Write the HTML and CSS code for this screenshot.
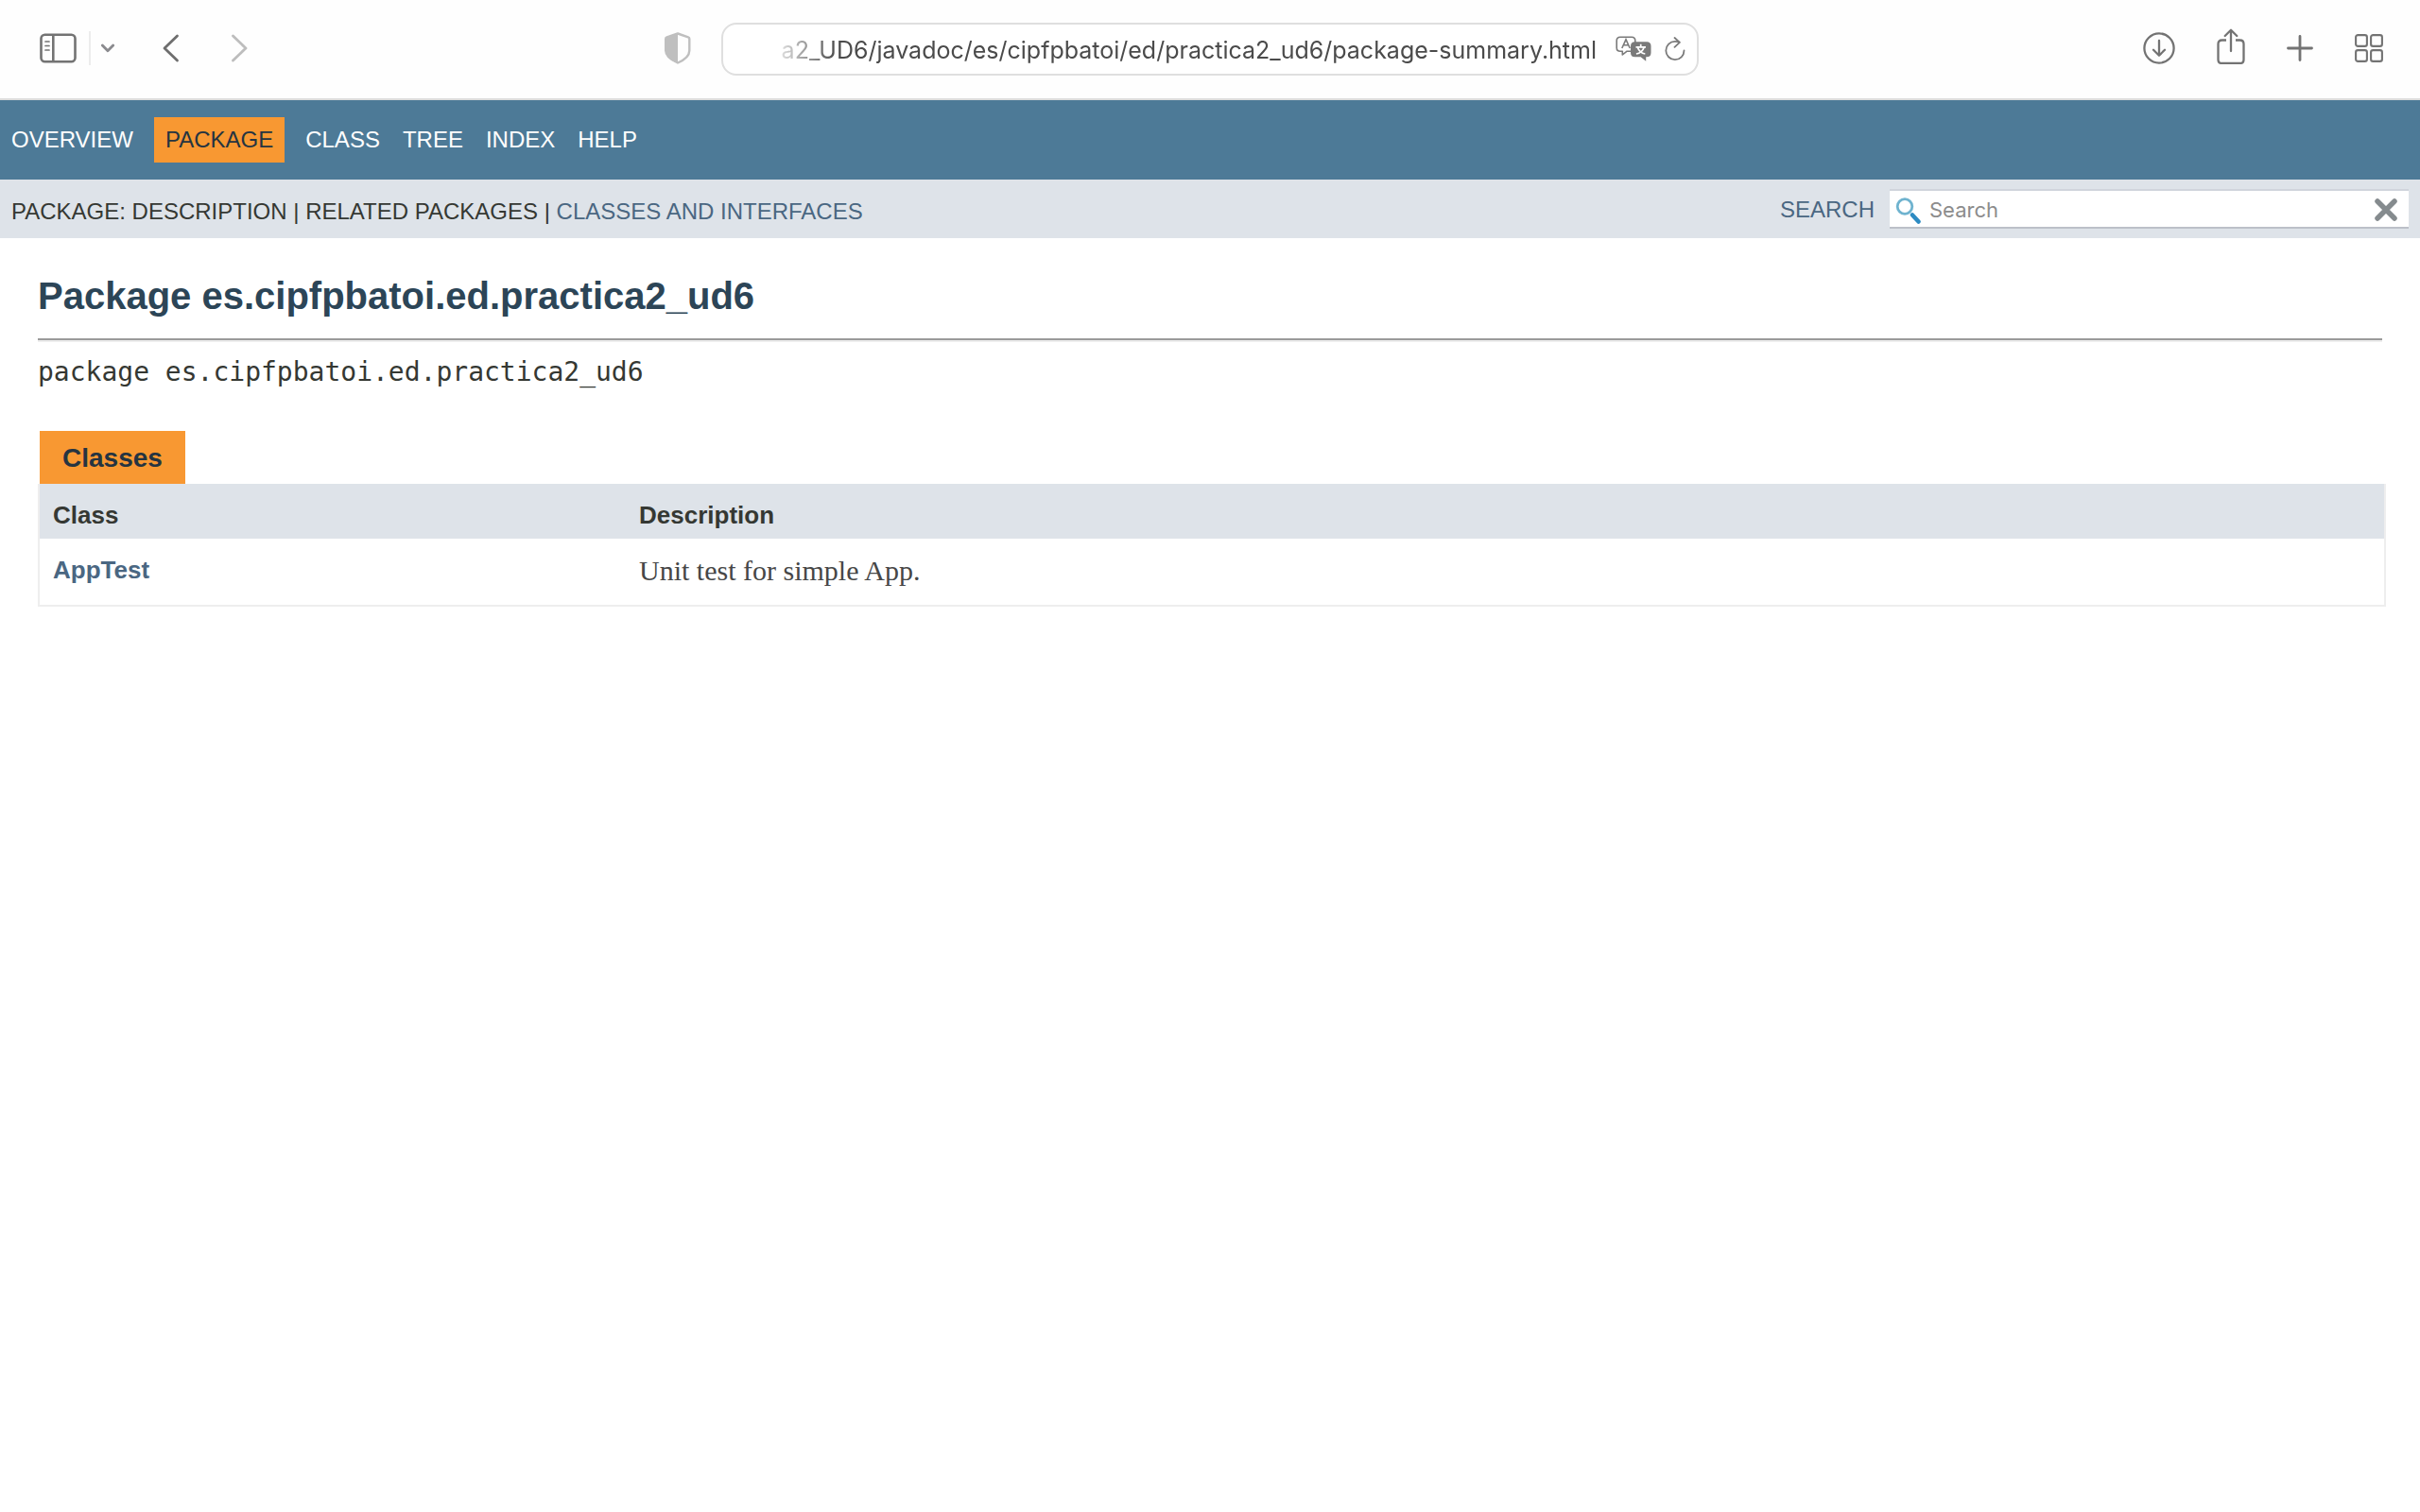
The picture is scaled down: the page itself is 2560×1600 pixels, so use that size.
FILE: index.html
```html
<!DOCTYPE html>
<html lang="en">
<head>
<meta charset="utf-8">
<title>es.cipfpbatoi.ed.practica2_ud6</title>
<link rel="stylesheet" href="styles.css">
</head>
<body>
<header class="toolbar">
  <div class="tools tools-left">
    <button class="tool" type="button" aria-label="Show sidebar">
      <svg width="40" height="32" viewBox="0 0 40 32" fill="none" stroke="#737373" stroke-width="2.6"><rect x="1.5" y="1.7" width="36" height="28.6" rx="4"/><path d="M14.300 2v28"/><path d="M6 9h4M6 13.500h4M6 18h4" stroke-width="1.700" stroke-linecap="round"/></svg>
    </button>
    <span class="divider"></span>
    <button class="tool" type="button" aria-label="Tab groups">
      <svg width="16" height="12" viewBox="0 0 16 12" fill="none" stroke="#8a8a8e" stroke-width="2.800" stroke-linecap="round" stroke-linejoin="round"><path d="M2.300 3l5.700 5.800L13.700 3"/></svg>
    </button>
    <button class="tool tool-back" type="button" aria-label="Back">
      <svg width="18" height="30" viewBox="0 0 18 30" fill="none" stroke="#6e6e6e" stroke-width="2.800" stroke-linecap="round" stroke-linejoin="round"><path d="M15.500 2L2 15l13.500 13"/></svg>
    </button>
    <button class="tool tool-forward" type="button" aria-label="Forward">
      <svg width="18" height="30" viewBox="0 0 18 30" fill="none" stroke="#bdbdbd" stroke-width="2.800" stroke-linecap="round" stroke-linejoin="round"><path d="M2.500 2L16 15 2.500 28"/></svg>
    </button>
    <button class="tool tool-shield" type="button" aria-label="Privacy report">
      <svg width="28" height="34" viewBox="0 0 28 34"><path d="M14 1.500L2.500 5.400Q1.200 5.900 1.200 7v12.500c0 6 5.500 9.800 12.800 13 7.300-3.200 12.300-7 12.300-13V7q0-1.100-1.300-1.600z" fill="none" stroke="#bfbfbf" stroke-width="2.400" stroke-linejoin="round"/><path d="M14 1L1 6v13.500C1 26 6.500 30 14 33z" fill="#bfbfbf"/></svg>
    </button>
  </div>
  <div class="address">
    <input class="address-input" type="text" aria-label="Address" value="a2_UD6/javadoc/es/cipfpbatoi/ed/practica2_ud6/package-summary.html">
    <button class="tool" type="button" aria-label="Translate">
      <svg width="38" height="28" viewBox="0 0 38 28"><path d="M5 1.200h12q3.800 0 3.800 3.800v11.300h-9L7.300 20v-3.700H5q-3.800 0-3.800-3.800V5q0-3.800 3.800-3.800z" fill="none" stroke="#7a7a7a" stroke-width="1.600" stroke-linejoin="round"/><path d="M6.800 13L11 3.800 15.200 13M8.300 9.800h5.400" fill="none" stroke="#7a7a7a" stroke-width="1.600"/><path d="M20.500 6.200h12.500q4.500 0 4.500 4.500v7q0 4.500-4.500 4.500h-.8v4.500l-5.600-4.500h-6.100q-4.500 0-4.500-4.500v-7q0-4.500 4.500-4.500z" fill="#7a7a7a"/><path d="M26.700 8.800v2.500M21.500 11.900h10.500M23.300 12c1 3 4 6.300 8 7M30.200 12c-1 3-4 6.300-8.300 7" fill="none" stroke="#fff" stroke-width="1.700"/></svg>
    </button>
    <button class="tool tool-reload" type="button" aria-label="Reload">
      <svg width="22" height="26" viewBox="0 0 22 26" fill="none" stroke="#7a7a7a" stroke-width="1.800" stroke-linecap="round" stroke-linejoin="round"><path d="M20.500 14.500a9.600 9.600 0 1 1-9.500-9.600q2.500 0 4.500.8"/><path d="M10.500 1l5.300 4.900-5.300 5"/></svg>
    </button>
  </div>
  <div class="tools tools-right">
    <button class="tool" type="button" aria-label="Downloads">
      <svg width="34" height="34" viewBox="0 0 34 34" fill="none" stroke="#737373" stroke-width="2.300" stroke-linecap="round" stroke-linejoin="round"><circle cx="17" cy="17" r="15.600"/><path d="M17 9v15.500M11 18.800l6 5.900 6-5.900"/></svg>
    </button>
    <button class="tool tool-share" type="button" aria-label="Share">
      <svg width="30" height="38" viewBox="0 0 30 38" fill="none" stroke="#737373" stroke-width="2.300" stroke-linecap="round" stroke-linejoin="round"><path d="M10 12.500H5.500q-4 0-4 4V33q0 4 4 4h19q4 0 4-4V16.500q0-4-4-4H20" stroke-linecap="butt"/><path d="M15 24V2M8.700 8L15 1.800 21.300 8"/></svg>
    </button>
    <button class="tool" type="button" aria-label="New tab">
      <svg width="28" height="28" viewBox="0 0 28 28" fill="none" stroke="#737373" stroke-width="2.800" stroke-linecap="round"><path d="M14 1.500v25M1.500 14h25"/></svg>
    </button>
    <button class="tool" type="button" aria-label="Tab overview">
      <svg width="30" height="30" viewBox="0 0 30 30" fill="none" stroke="#737373" stroke-width="2.100"><rect x="1.100" y="1.100" width="11.800" height="11.800" rx="2.200"/><rect x="17.100" y="1.100" width="11.800" height="11.800" rx="2.200"/><rect x="1.100" y="17.100" width="11.800" height="11.800" rx="2.200"/><rect x="17.100" y="17.100" width="11.800" height="11.800" rx="2.200"/></svg>
    </button>
  </div>
</header>

<nav class="top-nav">
  <ul class="nav-list">
    <li><a href="#">OVERVIEW</a></li>
    <li class="active">PACKAGE</li>
    <li><a href="#">CLASS</a></li>
    <li><a href="#">TREE</a></li>
    <li><a href="#">INDEX</a></li>
    <li><a href="#">HELP</a></li>
  </ul>
</nav>
<div class="sub-nav">
  <div class="sub-links">PACKAGE: DESCRIPTION | RELATED PACKAGES | <a href="#classes">CLASSES AND INTERFACES</a></div>
  <form class="search">
    <label for="search">SEARCH</label>
    <div class="search-box">
      <svg width="28" height="28" viewBox="0 0 28 28" fill="none"><circle cx="10" cy="9.500" r="7.800" stroke="#6fb3cf" stroke-width="2.800"/><path d="M18 18.500l6.500 7" stroke="#2d8bc2" stroke-width="4.500" stroke-linecap="round"/></svg>
      <input id="search" type="text" placeholder="Search">
      <button class="tool" type="reset" aria-label="Reset">
        <svg width="24" height="24" viewBox="0 0 24 24" fill="none" stroke="#858b8e" stroke-width="5.500" stroke-linecap="round"><path d="M3 3l18 18M21 3L3 21"/></svg>
      </button>
    </div>
  </form>
</div>

<main>
  <h1>Package es.cipfpbatoi.ed.practica2_ud6</h1>
  <hr>
  <div class="signature">package es.cipfpbatoi.ed.practica2_ud6</div>
  <section id="classes">
    <h2 class="caption">Classes</h2>
    <table class="summary">
      <thead><tr><th scope="col" class="col-class">Class</th><th scope="col">Description</th></tr></thead>
      <tbody><tr><td><a href="#">AppTest</a></td><td class="description">Unit test for simple App.</td></tr></tbody>
    </table>
  </section>
</main>
</body>
</html>
```
FILE: styles.css
```css
* { box-sizing: border-box; }
body {
  margin: 0;
  background: #fff;
  color: #353833;
  font-family: "Liberation Sans", Arial, sans-serif;
  font-size: 28px;
}
a { color: #4a6782; text-decoration: none; }
button { padding: 0; border: 0; background: none; }
svg { display: block; }

.toolbar {
  display: grid;
  grid-template-columns: 1fr minmax(0, 1034px) 1fr;
  align-items: center;
  height: 106px;
  padding-bottom: 2px;
  border-bottom: 2px solid #dcdcdc;
  background: #fefefe;
}
.tool { flex: none; }
.tools { display: flex; align-items: center; }
.tools-left { padding: 0 32px 0 42px; }
.divider { width: 2px; height: 36px; margin: 0 10px 0 12px; background: #ececec; }
.tool-back { margin-left: 50px; }
.tool-forward { margin-left: 54px; }
.tool-shield { margin-left: auto; }
.tools-right { justify-content: flex-end; gap: 44px; padding-right: 39px; }
.tool-share { margin-bottom: 4px; }
.address {
  display: flex;
  align-items: center;
  height: 56px;
  margin-top: 2px;
  padding: 0 12px 0 48px;
  border: 2px solid #dfdfdf;
  border-radius: 16px;
  background: #fff;
}
.address-input {
  flex: 1;
  min-width: 0;
  margin-right: 20px;
  padding: 2px 0 0;
  border: 0;
  background: none;
  color: #4b4b4b;
  font: 25px Inter, sans-serif;
  text-align: right;
  -webkit-mask-image: linear-gradient(to right, transparent, #000 72px);
  mask-image: linear-gradient(to right, transparent, #000 72px);
}
.tool-reload { margin-left: 14px; }

.top-nav { padding: 18px 0; background: #4d7a97; }
.nav-list {
  display: flex;
  margin: 0;
  padding: 0;
  list-style: none;
  font-size: 24px;
  line-height: 48px;
}
.nav-list li { padding: 0 12px; }
.nav-list a { color: #fff; }
.nav-list .active { margin: 0 10px; background: #f89832; color: #253441; }

.sub-nav {
  display: flex;
  justify-content: space-between;
  align-items: center;
  height: 62px;
  padding: 0 12px;
  background: #dee3e9;
  font-size: 24px;
}
.sub-links { padding-top: 6px; }
.search { display: flex; align-items: center; gap: 16px; }
.search label { padding-top: 2px; color: #4a6782; }
.search-box {
  display: flex;
  align-items: center;
  width: 549px;
  height: 42px;
  padding: 4px 12px 0 6px;
  border-top: 2px solid #d0d4dc;
  border-bottom: 2px solid #bcc0c8;
  background: #fff;
}
.search-box input {
  flex: 1;
  min-width: 0;
  margin: 0 8px;
  padding: 0 0 2px;
  border: 0;
  background: none;
  color: #353833;
  font: 22px Inter, sans-serif;
}
.search-box input::placeholder { color: #8c8c8c; }
.search-box .tool { margin-bottom: 2px; }

main { padding: 38px 36px 0 40px; }
h1 { margin: 0; color: #2c4557; font-size: 40px; line-height: 46px; }
hr { margin: 22px 4px 0 0; border: 2px solid; border-width: 2px 0; border-color: #9a9a9a #eee #eee #9a9a9a; }
.signature { margin-top: 16px; font-family: "DejaVu Sans Mono", monospace; line-height: 32px; }
.caption {
  width: fit-content;
  margin: 46px 0 0 2px;
  padding: 2px 24px 0;
  background: #f89832;
  color: #253441;
  font-size: 28px;
  line-height: 54px;
}
.summary {
  width: 100%;
  border: 2px solid #eee;
  border-top: 0;
  border-spacing: 0;
  font-size: 26px;
  line-height: 30px;
}
.summary th { padding: 18px 14px 10px; background: #dee3e9; text-align: left; }
.summary td { padding: 18px 14px 20px; vertical-align: top; }
.summary .col-class { width: 25%; }
.summary td a { font-weight: bold; }
.summary .description { color: #474747; font-family: Georgia, "Liberation Serif", serif; font-size: 30px; line-height: 32px; }
```
